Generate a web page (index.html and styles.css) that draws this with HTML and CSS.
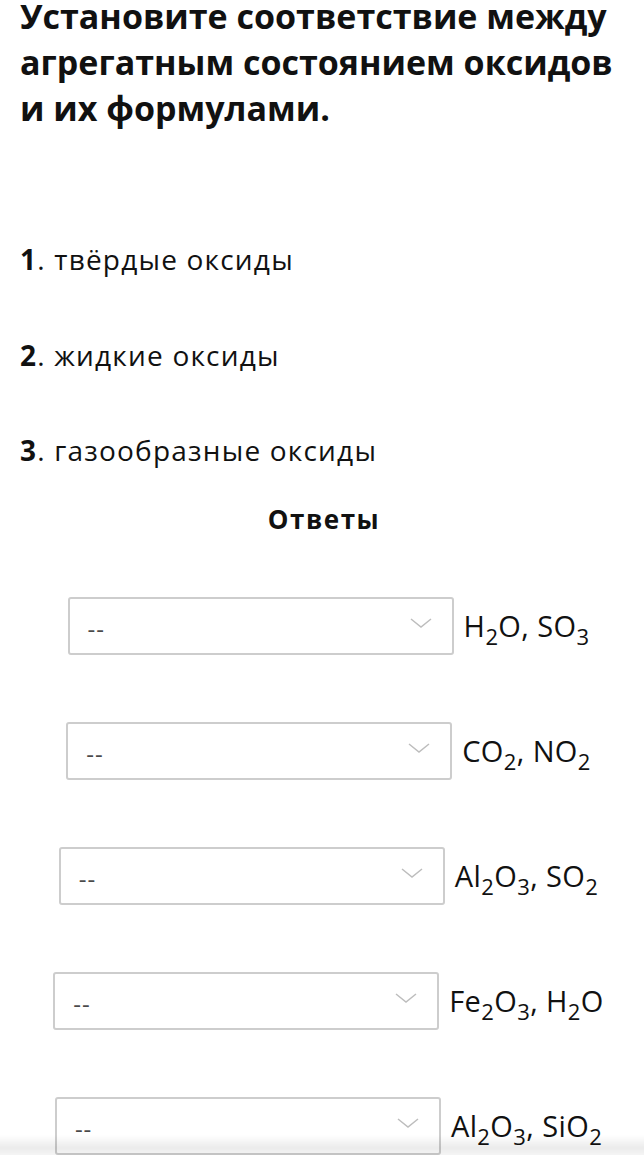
FILE: index.html
```html
<!DOCTYPE html>
<html lang="ru">
<head>
    <meta charset="UTF-8">
    <meta name="viewport" content="width=device-width, initial-scale=1.0">
    <title>Установите соответствие</title>
    <link rel="stylesheet" href="styles.css">
</head>
<body>
    <div class="question">
        <h1 class="title">Установите соответствие между агрегатным состоянием оксидов и их формулами.</h1>

        <div class="items">
            <p class="item"><b>1</b>. твёрдые оксиды</p>
            <p class="item"><b>2</b>. жидкие оксиды</p>
            <p class="item"><b>3</b>. газообразные оксиды</p>
        </div>

        <h2 class="answers-title">Ответы</h2>

        <div class="answers">
            <div class="answer-row">
                <div class="select"><span>--</span><svg class="chevron" viewBox="0 0 22 10"><path d="M1 1 L11 9 L21 1"/></svg></div>
                <span class="formula">H<sub>2</sub>O, SO<sub>3</sub></span>
            </div>
            <div class="answer-row">
                <div class="select"><span>--</span><svg class="chevron" viewBox="0 0 22 10"><path d="M1 1 L11 9 L21 1"/></svg></div>
                <span class="formula">CO<sub>2</sub>, NO<sub>2</sub></span>
            </div>
            <div class="answer-row">
                <div class="select"><span>--</span><svg class="chevron" viewBox="0 0 22 10"><path d="M1 1 L11 9 L21 1"/></svg></div>
                <span class="formula">Al<sub>2</sub>O<sub>3</sub>, SO<sub>2</sub></span>
            </div>
            <div class="answer-row">
                <div class="select"><span>--</span><svg class="chevron" viewBox="0 0 22 10"><path d="M1 1 L11 9 L21 1"/></svg></div>
                <span class="formula">Fe<sub>2</sub>O<sub>3</sub>, H<sub>2</sub>O</span>
            </div>
            <div class="answer-row">
                <div class="select"><span>--</span><svg class="chevron" viewBox="0 0 22 10"><path d="M1 1 L11 9 L21 1"/></svg></div>
                <span class="formula">Al<sub>2</sub>O<sub>3</sub>, SiO<sub>2</sub></span>
            </div>
        </div>
    </div>
    <div class="bottom-shade"></div>
</body>
</html>
```

FILE: styles.css
```css
body {
    font-family: 'Open Sans', 'Noto Sans', sans-serif;
    color: #111;
    background: #fff;
    margin: 0;
    overflow: hidden;
}
.question {
    padding: 0 16px 0 20px;
}
.title {
    margin: -7px 0 0;
    font-size: 34px;
    line-height: 46px;
    font-weight: 700;
}
.items {
    margin-top: 110px;
    display: flex;
    flex-direction: column;
    gap: 59.5px;
}
.item {
    margin: 0;
    font-size: 28px;
    line-height: 36px;
    letter-spacing: 1.2px;
}
.item b {
    font-weight: 700;
}
.answers-title {
    margin: 34px 0 0;
    text-align: center;
    font-size: 26px;
    line-height: 34px;
    font-weight: 700;
    letter-spacing: 1.5px;
}
.answers {
    margin-top: 61px;
    padding-left: 9px;
    display: flex;
    flex-direction: column;
    gap: 67px;
}
.answer-row {
    display: flex;
    justify-content: center;
    align-items: center;
    gap: 10px;
}
.select {
    box-sizing: border-box;
    width: 386px;
    height: 58px;
    border: 2px solid #cdcdcd;
    border-radius: 3px;
    display: flex;
    align-items: center;
    justify-content: space-between;
    padding: 4px 20px 0 18px;
    font-size: 24px;
    letter-spacing: 1px;
    color: #4a4a4a;
}
.chevron {
    width: 22px;
    height: 10px;
    margin-top: -11px;
    fill: none;
    stroke: #bdbdbd;
    stroke-width: 1.5;
}
.formula {
    font-size: 29px;
    line-height: 36px;
    letter-spacing: 0.4px;
    white-space: nowrap;
}
.formula sub {
    font-size: 22px;
    line-height: 0;
    vertical-align: -8px;
}
.bottom-shade {
    position: fixed;
    left: 0;
    right: 0;
    bottom: 0;
    height: 20px;
    background: linear-gradient(to bottom, rgba(0,0,0,0), rgba(0,0,0,0.08) 65%, rgba(0,0,0,0.04));
}
```
